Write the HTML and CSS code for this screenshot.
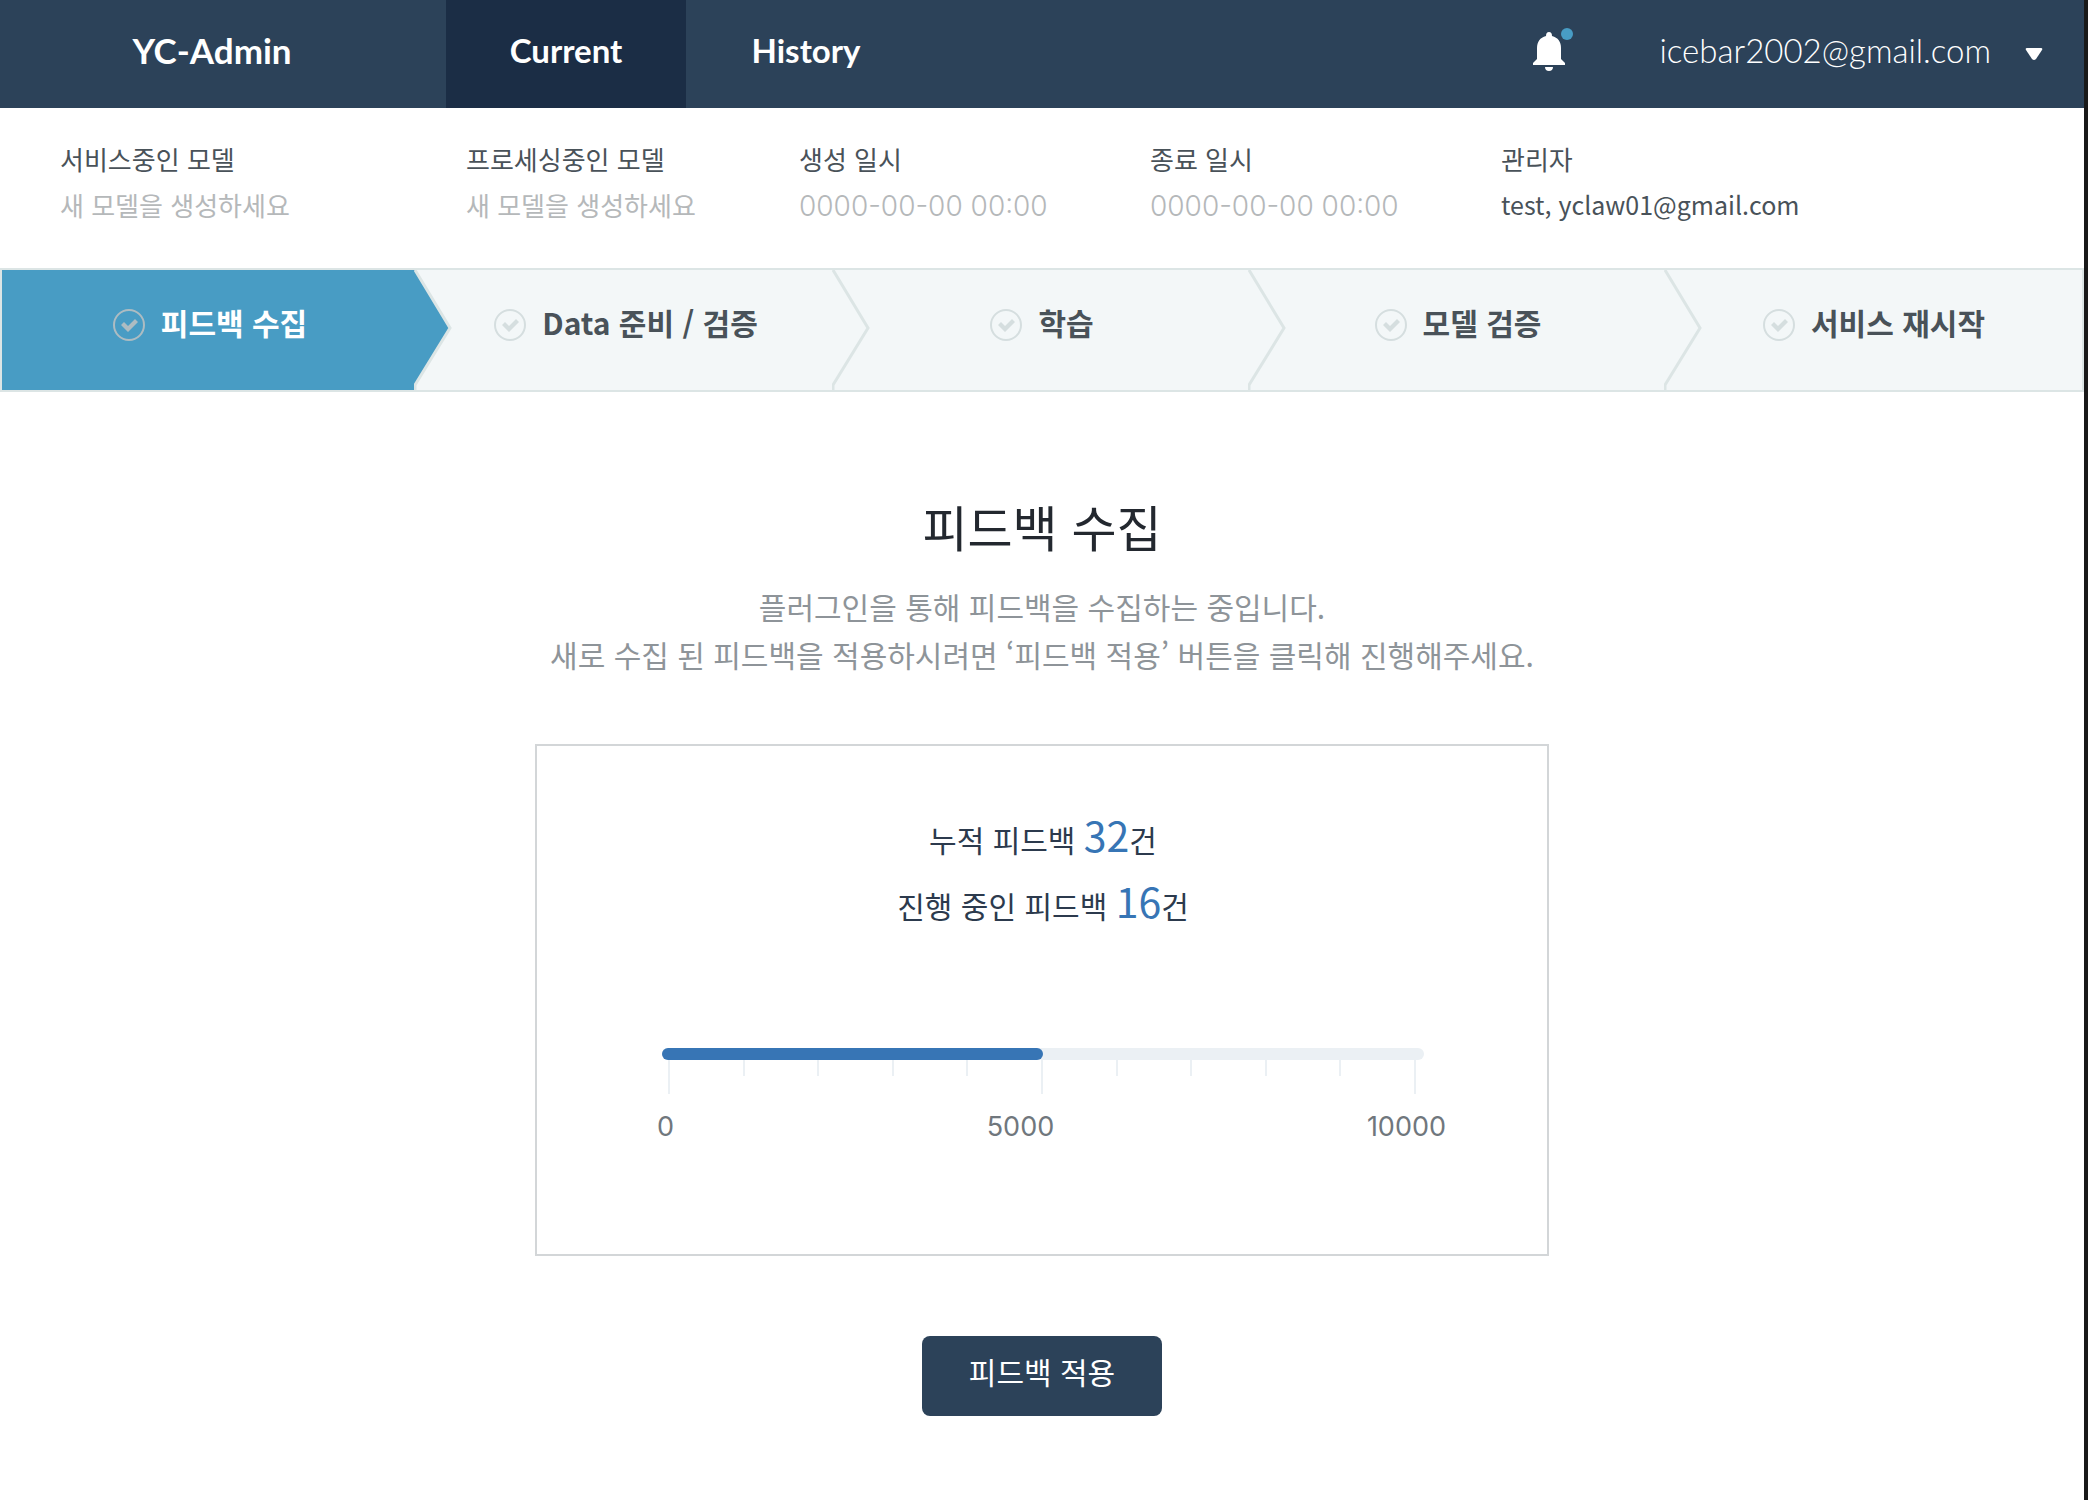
FILE: index.html
```html
<!DOCTYPE html>
<html lang="ko">
<head>
<meta charset="utf-8">
<meta name="viewport" content="width=device-width, initial-scale=1">
<title>YC-Admin</title>
<link rel="stylesheet" href="styles.css">
</head>
<body>
<svg class="symbols" aria-hidden="true">
  <symbol id="check" viewBox="0 0 32 32">
    <circle cx="16" cy="16" r="15" fill="none" stroke="currentColor" stroke-width="2"/>
    <path d="M8 16l3-3 4 4 7-7 3 3-10 10z" fill="currentColor"/>
  </symbol>
</svg>
<header class="topbar">
  <a class="brand" href="#">YC-Admin</a>
  <nav class="nav">
    <a class="nav-link active" href="#" aria-current="page">Current</a>
    <a class="nav-link" href="#">History</a>
  </nav>
  <button class="bell" type="button" aria-label="알림">
    <svg width="34" height="40" viewBox="0 0 34 40" fill="#fff" aria-hidden="true"><path d="M17 0c2 0 3 1.500 3 4 6 1.500 9 6 9 12v11l4 4v2H1v-2l4-4V16c0-6 3-10.500 9-12 0-2.500 1-4 3-4zM13 35h8c0 2.500-1.500 4-4 4s-4-1.500-4-4z"/></svg>
    <span class="dot"></span>
  </button>
  <button class="account" type="button">icebar2002@gmail.com
    <svg width="18" height="14" viewBox="0 0 18 14" aria-hidden="true"><path d="M2 1h14q2 0 1 2l-6 9q-2 2-4 0L1 3q-1-2 1-2z" fill="#fff"/></svg>
  </button>
</header>
<dl class="info">
  <div><dt>서비스중인 모델</dt><dd>새 모델을 생성하세요</dd></div>
  <div><dt>프로세싱중인 모델</dt><dd>새 모델을 생성하세요</dd></div>
  <div><dt>생성 일시</dt><dd class="date">0000-00-00 00:00</dd></div>
  <div><dt>종료 일시</dt><dd class="date">0000-00-00 00:00</dd></div>
  <div><dt>관리자</dt><dd class="admin">test, yclaw01@gmail.com</dd></div>
</dl>
<ol class="steps">
  <li class="step current" aria-current="step"><svg class="check" aria-hidden="true"><use href="#check"/></svg><span class="label">피드백 수집</span><svg class="arrow" viewBox="0 0 38 120" aria-hidden="true"><path d="M0 0H38V120H0z" fill="#f3f7f8"/><path d="M0 0H1L36 58L1 115V120H0z" fill="#489cc4"/><path d="M1 0L36 58L1 115V120" fill="none" stroke="#dce5e5" stroke-width="3"/></svg></li>
  <li class="step"><svg class="check" aria-hidden="true"><use href="#check"/></svg><span class="label">Data 준비 / 검증</span><svg class="arrow" viewBox="0 0 38 120" aria-hidden="true"><path d="M1 0L36 58L1 115V120" fill="none" stroke="#dce5e5" stroke-width="3"/></svg></li>
  <li class="step"><svg class="check" aria-hidden="true"><use href="#check"/></svg><span class="label">학습</span><svg class="arrow" viewBox="0 0 38 120" aria-hidden="true"><path d="M1 0L36 58L1 115V120" fill="none" stroke="#dce5e5" stroke-width="3"/></svg></li>
  <li class="step"><svg class="check" aria-hidden="true"><use href="#check"/></svg><span class="label">모델 검증</span><svg class="arrow" viewBox="0 0 38 120" aria-hidden="true"><path d="M1 0L36 58L1 115V120" fill="none" stroke="#dce5e5" stroke-width="3"/></svg></li>
  <li class="step"><svg class="check" aria-hidden="true"><use href="#check"/></svg><span class="label">서비스 재시작</span></li>
</ol>
<main class="content">
  <h1>피드백 수집</h1>
  <p class="lead">플러그인을 통해 피드백을 수집하는 중입니다.<br>새로 수집 된 피드백을 적용하시려면 ‘피드백 적용’ 버튼을 클릭해 진행해주세요.</p>
  <section class="panel">
    <p class="count">누적 피드백 <strong>32</strong>건</p>
    <p class="count">진행 중인 피드백 <strong>16</strong>건</p>
    <div class="gauge">
      <div class="track" role="progressbar" aria-label="피드백" aria-valuemin="0" aria-valuemax="10000" aria-valuenow="5000"><div class="fill" style="width: 50%"></div></div>
      <div class="ticks"><i></i><i></i><i></i><i></i><i></i><i></i><i></i><i></i><i></i><i></i><i></i></div>
      <div class="scale"><span>0</span><span>5000</span><span>10000</span></div>
    </div>
  </section>
  <button class="apply" type="button">피드백 적용</button>
</main>
</body>
</html>
```
FILE: styles.css
```css
* { box-sizing: border-box; }

body {
  margin: 0;
  min-height: 100vh;
  border-right: 4px solid #191919;
  background: #fff;
  color: #495259;
  font-family: "Noto Sans CJK KR", sans-serif;
  font-size: 30px;
}

p, h1, dl, dd, ol { margin: 0; padding: 0; }
a { color: inherit; text-decoration: none; }
button { border: 0; padding: 0; background: none; color: inherit; font: inherit; cursor: pointer; }
.symbols { display: none; }

.topbar {
  display: flex;
  height: 108px;
  background: #2c4259;
  color: #fff;
  font-family: Lato, sans-serif;
  font-size: 33px;
  font-weight: 700;
  line-height: 100px;
}
.brand { width: 446px; padding-right: 22px; font-size: 35px; text-align: center; }
.nav { display: flex; margin-right: auto; }
.nav-link { width: 240px; text-align: center; }
.nav-link.active { background: #1b2d45; }

.bell { position: relative; display: flex; align-items: center; margin-right: 94px; padding-bottom: 4px; }
.dot { position: absolute; top: 28px; right: -7px; width: 12px; height: 12px; border-radius: 50%; background: #489cc4; }
.account { display: flex; align-items: center; gap: 34px; margin-right: 41px; padding-bottom: 8px; font-weight: 300; }
.account svg { margin-top: 8px; }

.info {
  display: grid;
  grid-template-columns: 406fr 333fr 351fr 351fr 583fr;
  height: 160px;
  padding: 28px 0 0 60px;
  font-size: 26px;
  line-height: 46px;
}
.info dd { color: #b5b8ba; }
.info .date { font-family: Inter, sans-serif; font-size: 28px; font-weight: 300; line-height: 48px; }
.info .admin { color: #495259; font-size: 25px; line-height: 44px; }

.steps {
  display: grid;
  grid-template-columns: repeat(5, 1fr);
  border: 2px solid #dce5e5;
  background: #f3f7f8;
  list-style: none;
}
.step {
  position: relative;
  display: flex;
  align-items: center;
  justify-content: center;
  gap: 16px;
  height: 120px;
  padding-bottom: 10px;
  font-weight: 700;
}
.label { padding-bottom: 6px; }
.check { width: 32px; height: 32px; color: #d5dedf; }
.current { background: #489cc4; color: #fff; }
.current .check { color: #adbcc2; }
.arrow { position: absolute; z-index: 1; top: 0; left: calc(100% - 2px); width: 38px; height: 120px; }
.current .arrow { left: calc(100% - 4px); }

.content { display: flex; flex-direction: column; align-items: center; padding: 94px 24px 84px; text-align: center; }
h1 { color: #23282f; font-size: 49px; font-weight: 400; line-height: 80px; }
.lead { margin-top: 16px; color: #8e9499; line-height: 48px; }
.panel {
  width: 100%;
  max-width: 1014px;
  margin-top: 66px;
  padding: 60px 123px 110px 125px;
  border: 2px solid #d3d6d8;
  color: #2c3a4d;
}
.count { line-height: 66px; }
.count strong { color: #3775b5; font-size: 41px; font-weight: 400; line-height: 1; }
.gauge { margin-top: 110px; }
.track { height: 12px; border-radius: 6px; background: #ebf0f4; }
.fill { height: 12px; border-radius: 6px; background: #3775b5; }
.ticks { display: flex; justify-content: space-between; padding: 0 8px 0 6px; }
.ticks i { width: 2px; height: 16px; background: #ebf0f4; }
.ticks i:nth-child(5n + 1) { height: 34px; }
.scale { display: flex; justify-content: space-between; margin: 16px -22px 0 -5px; color: #70777d; font-family: Inter, sans-serif; font-size: 27px; line-height: 34px; }
.apply { width: 240px; height: 80px; margin-top: 80px; padding-bottom: 10px; border-radius: 8px; background: #2c4259; color: #fff; }
```
